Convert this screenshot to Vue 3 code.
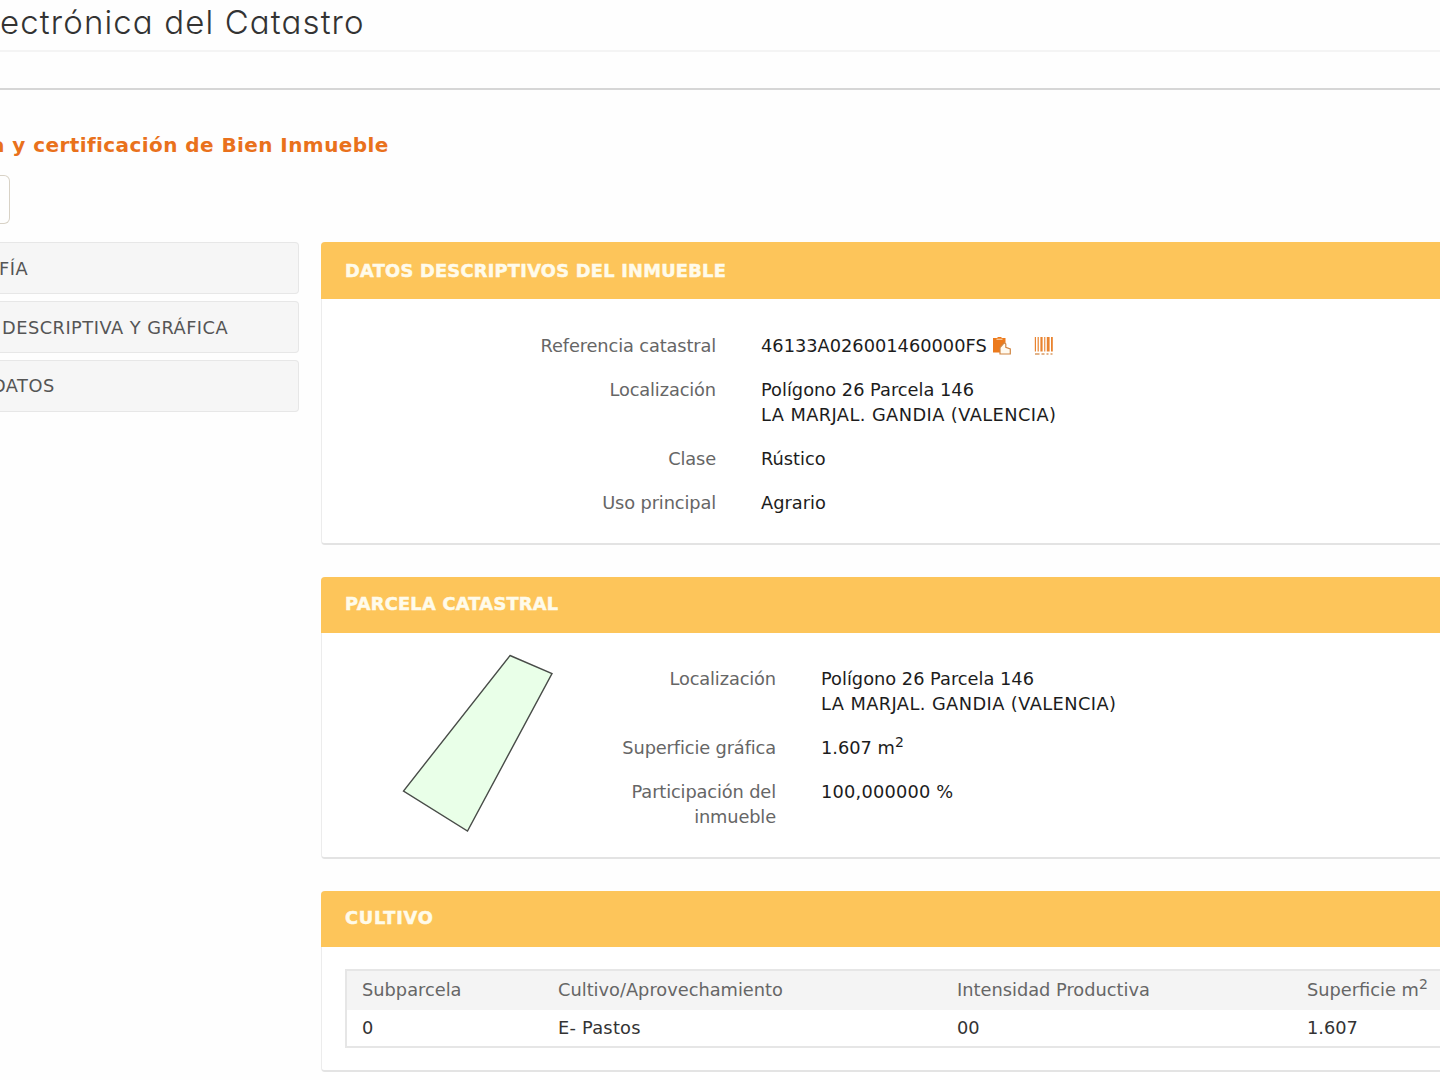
<script setup>
const menu = [
  { text: 'FÍA', cls: 'first' },
  { text: 'DESCRIPTIVA Y GRÁFICA', cls: 'second' },
  { text: 'DATOS', cls: 'third' }
]
const bars = [
  { x: 0.8, w: 1.2 }, { x: 3.6, w: 1.2 }, { x: 6.4, w: 2.2 }, { x: 10.2, w: 1.1 }, { x: 12.8, w: 2.8 }, { x: 17, w: 1.8 }
]
</script>

<template>
  <div class="page">
    <header class="top"><span class="brand">ectrónica del Catastro</span></header>
    <div class="strip"></div>
    <h1 class="title"><span>a y certificación de Bien Inmueble</span></h1>
    <div class="tab"></div>
    <div class="columns">
      <nav class="menu">
        <a v-for="m in menu" :key="m.text" :class="m.cls"><span>{{ m.text }}</span></a>
      </nav>
      <main class="content">
        <section class="panel datos">
          <h2><span>DATOS DESCRIPTIVOS DEL INMUEBLE</span></h2>
          <dl>
            <dt>Referencia catastral</dt>
            <dd class="ref">
              <span class="code">46133A026001460000FS</span>
              <svg class="copy" width="20" height="20" viewBox="0 0 20 20">
                <path d="M1 2h4l1-1h3l1 1h3.500v6L9 12v4.500H1z" fill="#ec7a1c" />
                <path d="M4.500 3.300h6" stroke="#f8c797" stroke-width="1.300" />
                <path d="M8 18V11.500L12.200 6.800L13.800 8V11.300L18.300 13V18z" fill="#fffaf0" stroke="#d08542" stroke-width="1.200" />
              </svg>
              <svg class="barcode" width="20" height="20" viewBox="0 0 20 20">
                <rect v-for="b in bars" :key="b.x" :x="b.x" y="1" :width="b.w" height="14.500" fill="#e9832f" />
                <path d="M1 18h4.500M7.500 18h3M12.500 18h2M16.500 18h2" stroke="#d99a63" stroke-width="1.300" />
              </svg>
            </dd>
            <dt>Localización</dt>
            <dd><span>Polígono 26 Parcela 146</span><br><span class="addr">LA MARJAL. GANDIA (VALENCIA)</span></dd>
            <dt>Clase</dt>
            <dd>Rústico</dd>
            <dt>Uso principal</dt>
            <dd>Agrario</dd>
          </dl>
        </section>

        <section class="panel parcela">
          <h2><span>PARCELA CATASTRAL</span></h2>
          <div class="parcel-body">
            <svg class="plot" width="160" height="190" viewBox="0 0 160 190">
              <path d="M113 10.500L155 28.500L70.500 186L6.500 146Z" fill="#e9ffe8" stroke="#484c48" stroke-width="1.400" />
            </svg>
            <dl>
              <dt>Localización</dt>
              <dd><span>Polígono 26 Parcela 146</span><br><span class="addr">LA MARJAL. GANDIA (VALENCIA)</span></dd>
              <dt>Superficie gráfica</dt>
              <dd>1.607 m<sup>2</sup></dd>
              <dt>Participación del<br>inmueble</dt>
              <dd class="percent">100,000000 %</dd>
            </dl>
          </div>
        </section>

        <section class="panel cultivo">
          <h2><span>CULTIVO</span></h2>
          <div class="grid">
            <div class="row head">
              <span>Subparcela</span><span>Cultivo/Aprovechamiento</span><span>Intensidad Productiva</span><span>Superficie m<sup>2</sup></span>
            </div>
            <div class="row">
              <span>0</span><span class="crop">E- Pastos</span><span>00</span><span>1.607</span>
            </div>
          </div>
        </section>
      </main>
    </div>
  </div>
</template>

<style>
body { background: #fefefe; overflow: hidden; }
</style>

<style scoped>
* { box-sizing: border-box; }
.page {
  width: 1440px; height: 1080px; overflow: hidden; background: #fefefe;
  font-family: "DejaVu Sans", Verdana, sans-serif; font-size: 17.8px; line-height: 25px; color: #1c1c1c;
  white-space: nowrap;
}
.top { height: 52px; border-bottom: 2px solid #f4f4f4; }
.brand {
  display: block; font-family: Inter, sans-serif; font-weight: 300; font-size: 33px; line-height: 45px;
  letter-spacing: 1.12px; font-feature-settings: "cv11"; color: #333;
}
.strip { height: 38px; border-bottom: 2px solid #d6d6d6; }
.title { margin: 0; padding-top: 43px; height: 85px; font-size: 20px; line-height: 25px; font-weight: 700; letter-spacing: 0.42px; color: #e9711c; }
.title span { display: block; margin-left: -9px; }
.tab { width: 10px; height: 49px; border: 1px solid #d8d2c6; border-left: 0; border-radius: 0 6px 6px 0; }
.columns { display: flex; margin-top: 18px; gap: 22px; }
.menu { width: 299px; display: flex; flex-direction: column; gap: 7px; color: #555; letter-spacing: 0.48px; }
.menu a { display: block; height: 52px; padding-top: 13px; background: #f6f6f6; border: 1px solid #e7e7e7; border-left: 0; border-radius: 0 4px 4px 0; }
.menu .third { padding-top: 12px; }
.menu span { display: block; }
.first span { margin-left: -1px; }
.second span { margin-left: 2px; }
.third span { margin-left: -8px; }
.content { flex: 1; min-width: 0; }
.panel { background: #fff; border: 1px solid #ececec; border-top: 0; border-right: 0; border-bottom: 2px solid #e3e3e3; border-radius: 4px 0 0 4px; }
.panel h2 {
  margin: 0 0 0 -1px; height: 56px; padding: 14px 0 0 24px; background: #fdc55a; border-radius: 4px 0 0 0;
  font-size: 17.8px; line-height: 25px; font-weight: 700; letter-spacing: 0.26px; color: #fffbea; -webkit-text-stroke: 0.5px #fffbea;
}
.datos { height: 303px; }
.datos h2 { height: 57px; padding-top: 16px; }
.parcela { height: 282px; margin-top: 32px; }
.cultivo { height: 181px; margin-top: 32px; }
.cultivo h2 { letter-spacing: 0.8px; }
dl { margin: 0; display: grid; column-gap: 45px; row-gap: 19px; align-content: start; }
dt { text-align: right; color: #666; letter-spacing: -0.13px; }
dd { margin: 0; }
.addr { letter-spacing: 0.42px; }
.percent { letter-spacing: 0.2px; }
.crop { letter-spacing: 0.25px; }
sup { font-size: 14px; line-height: 0; vertical-align: 7px; }
.datos dl { grid-template-columns: 394px 1fr; padding-top: 34px; }
.ref { display: flex; align-items: center; }
.copy { margin-left: 5px; }
.barcode { margin-left: 22px; }
.parcel-body { display: flex; }
.plot { margin: 12px 0 0 75px; }
.parcel-body dl { grid-template-columns: 219px 1fr; padding-top: 33px; }
.grid { margin: 22px 0 0 23px; height: 79px; border: 2px solid #e6e6e6; border-right: 0; }
.row { display: grid; grid-template-columns: 196px 399px 350px 1fr; padding-left: 15px; height: 36px; padding-top: 5px; color: #333; }
.head { height: 39px; padding-top: 6px; background: #f4f4f4; color: #666; }
</style>
